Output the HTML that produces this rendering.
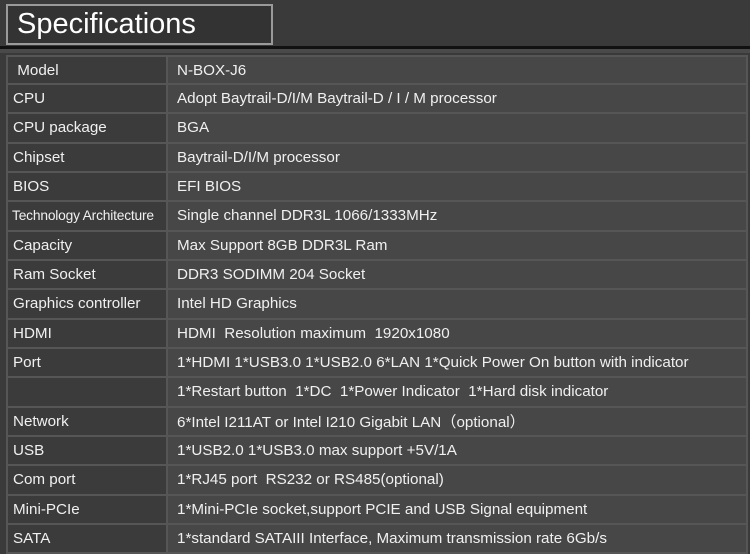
<!DOCTYPE html>
<html><head><style>
body{margin:0;width:750px;height:547px;overflow:hidden;background:#3a3a3a;font-family:"Liberation Sans",sans-serif;color:#f0f0f0}
.hd{position:absolute;left:6px;top:4px;width:263px;height:37px;border:2px solid #9a9a9a;background:#333}
.hd span{position:absolute;left:9px;top:2px;font-size:29px;color:#fff}
.ln{position:absolute;left:0;top:46px;width:750px;height:3px;background:#111}
.ln2{position:absolute;left:0;top:49px;width:750px;height:4px;background:#4a4a4a}
table{position:absolute;left:6px;top:55px;width:742px;border-collapse:collapse;font-size:15.2px}
td{height:27.33px;border:2px solid #565656;padding:0 0 0 5px;white-space:nowrap}
td.a{width:153px;background:#3b3b3b}
td.b{background:#474747;padding-left:9px}
tr:first-child td{height:25px;padding-top:1px}
</style></head><body>
<div class="hd"><span>Specifications</span></div>
<div class="ln"></div><div class="ln2"></div>
<table>
<tr><td class="a">&nbsp;Model</td><td class="b">N-BOX-J6</td></tr>
<tr><td class="a">CPU</td><td class="b">Adopt Baytrail-D/I/M Baytrail-D / I / M processor</td></tr>
<tr><td class="a">CPU package</td><td class="b">BGA</td></tr>
<tr><td class="a">Chipset</td><td class="b">Baytrail-D/I/M processor</td></tr>
<tr><td class="a">BIOS</td><td class="b">EFI BIOS</td></tr>
<tr><td class="a" style="font-size:13.8px;padding-left:4px;letter-spacing:-0.2px">Technology Architecture</td><td class="b">Single channel DDR3L 1066/1333MHz</td></tr>
<tr><td class="a">Capacity</td><td class="b">Max Support 8GB DDR3L Ram</td></tr>
<tr><td class="a">Ram Socket</td><td class="b">DDR3 SODIMM 204 Socket</td></tr>
<tr><td class="a">Graphics controller</td><td class="b">Intel HD Graphics</td></tr>
<tr><td class="a">HDMI</td><td class="b">HDMI&nbsp; Resolution maximum&nbsp; 1920x1080</td></tr>
<tr><td class="a">Port</td><td class="b">1*HDMI 1*USB3.0 1*USB2.0 6*LAN 1*Quick Power On button with indicator</td></tr>
<tr><td class="a"></td><td class="b">1*Restart button&nbsp; 1*DC&nbsp; 1*Power Indicator&nbsp; 1*Hard disk indicator</td></tr>
<tr><td class="a">Network</td><td class="b">6*Intel I211AT or Intel I210 Gigabit LAN（optional）</td></tr>
<tr><td class="a">USB</td><td class="b">1*USB2.0 1*USB3.0 max support +5V/1A</td></tr>
<tr><td class="a">Com port</td><td class="b">1*RJ45 port&nbsp; RS232 or RS485(optional)</td></tr>
<tr><td class="a">Mini-PCIe</td><td class="b">1*Mini-PCIe socket,support PCIE and USB Signal equipment</td></tr>
<tr><td class="a">SATA</td><td class="b">1*standard SATAIII Interface, Maximum transmission rate 6Gb/s</td></tr>
</table>
</body></html>
